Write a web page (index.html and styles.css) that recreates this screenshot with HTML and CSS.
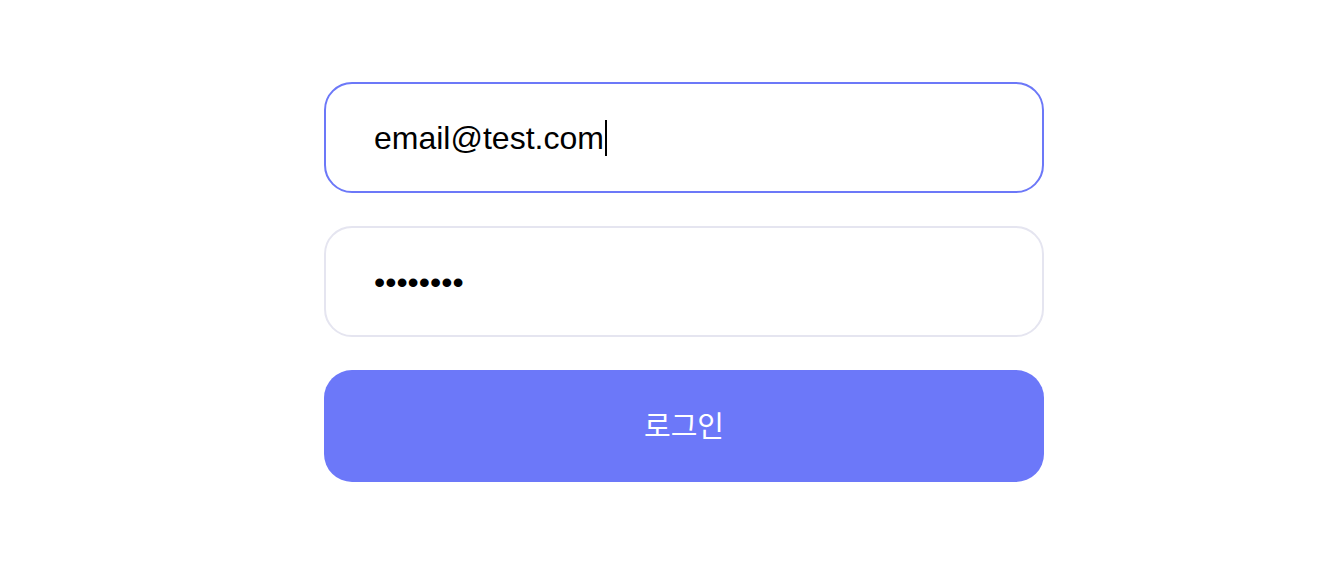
FILE: index.html
```html
<!DOCTYPE html>
<html lang="ko">
<head>
<meta charset="utf-8">
<title>로그인</title>
<link rel="stylesheet" href="styles.css">
</head>
<body>
<main class="page">
  <form class="login-form">
    <div class="field field-focused"><span class="field-text">email@test.com</span><span class="caret"></span></div>
    <div class="field"><span class="field-text">••••••••</span></div>
    <button type="button" class="submit">로그인</button>
  </form>
</main>
</body>
</html>
```
FILE: styles.css
```css
html, body {
  margin: 0;
  padding: 0;
  background: #ffffff;
}

.page {
  padding: 82px 0 0 324px;
}

.login-form {
  width: 720px;
  display: flex;
  flex-direction: column;
  gap: 33px;
}

.field {
  box-sizing: border-box;
  height: 111px;
  border: 2px solid #e5e5f0;
  border-radius: 28px;
  padding: 0 48px;
  display: flex;
  align-items: center;
  font-family: "Liberation Sans", Arial, sans-serif;
  font-size: 32px;
  color: #000000;
  background: #ffffff;
}

.field-focused {
  border-color: #6c78f8;
}

.field-text {
  white-space: pre;
  line-height: 1;
}

.caret {
  display: inline-block;
  width: 2px;
  height: 36px;
  background: #000000;
  margin-left: 1px;
}

.submit {
  height: 112px;
  border: none;
  border-radius: 28px;
  background: #6c78f9;
  color: #ffffff;
  font-family: "Noto Sans CJK KR", "Noto Sans", sans-serif;
  font-size: 29px;
  line-height: 1;
  padding: 0 0 4px 0;
  cursor: pointer;
}
```
